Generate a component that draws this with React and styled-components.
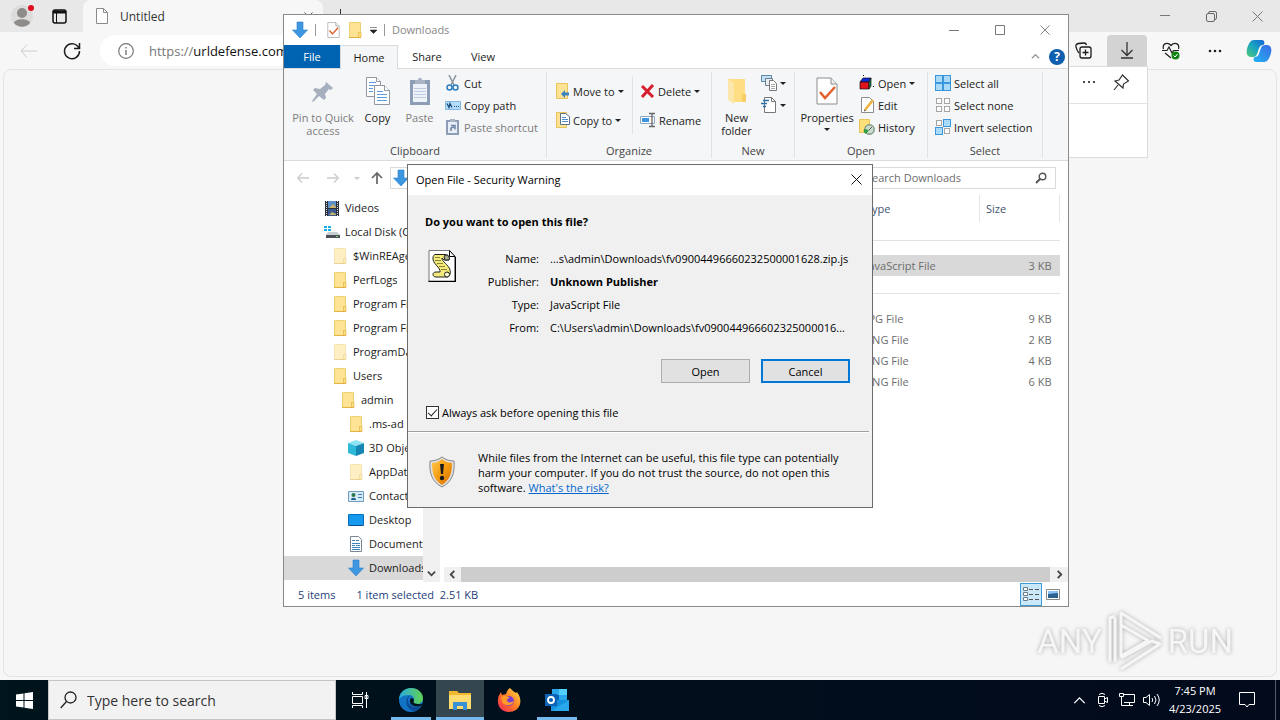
import React, {useState} from 'react'
import styled, {createGlobalStyle, css} from 'styled-components';

const GlobalStyle = createGlobalStyle`
  * {
    box-sizing: border-box;
  }
  body {
    margin: 0;
    overflow: hidden;
    font-family: "Open Sans", "Noto Sans", sans-serif;
    font-size: 11px;
    color: #1b1b1b;
  }
  button, input {
    font: inherit;
    color: inherit;
    margin: 0;
    padding: 0;
    border: 0;
    background: none;
  }
  svg {
    display: block;
    flex: none;
  }
`;

const Screen = styled.div`
  position: relative;
  display: flex;
  flex-direction: column;
  height: 100vh;
`;

/* ---------- browser ---------- */

const Browser = styled.div`
  position: relative;
  flex: 1;
  display: flex;
  flex-direction: column;
  background: #f7f7f7;
`;

const TabStrip = styled.div`
  display: flex;
  height: 32px;
  background: #e8e8e8;
`;

const TabActions = styled.div`
  display: flex;
  align-items: center;
  gap: 17px;
  width: 83px;
  padding-left: 10px;
`;

const BrowserTab = styled.div`
  display: flex;
  align-items: center;
  gap: 12px;
  width: 240px;
  padding: 0 10px 0 13px;
  background: #f7f7f7;
  border-radius: 8px 8px 0 0;
  font-size: 12px;
  color: #333;
`;

const TabTitle = styled.span`
  flex: 1;
`;

const PlainButton = styled.button`
  display: flex;
  align-items: center;
  justify-content: center;
`;

const NewTab = styled(PlainButton)`
  width: 34px;
`;

const WindowButtons = styled.div`
  display: flex;
  margin-left: auto;
`;

const WindowButton = styled(PlainButton)`
  width: ${props => props.$width || 46}px;
  color: #777;
`;

const Toolbar = styled.div`
  display: flex;
  align-items: center;
  height: 37px;
  padding: 0 1px 0 18px;
`;

const NavButton = styled(PlainButton)`
  width: 20px;
  margin-right: 24px;
`;

const AddressBar = styled.label`
  display: flex;
  align-items: center;
  flex: 1;
  height: 31px;
  margin: 0 20px 0 -6px;
  padding-left: 18px;
  background: #fff;
  border-radius: 16px;
  font-size: 13px;
  color: #777;
`;

const Scheme = styled.span`
  margin-left: 15px;
`;

const UrlInput = styled.input`
  flex: 1;
  min-width: 0;
  outline: 0;
  color: #111;
`;

const ToolButton = styled(PlainButton)`
  width: 40px;
  height: 31px;
  margin-left: 4px;
  border-radius: 4px 4px 0 0;
  background: ${props => props.$active ? '#d3d3d3' : 'none'};
`;

const PageView = styled.div`
  flex: 1;
  margin: 0 3px 3px;
  border: 1px solid #e3e3e3;
  border-radius: 8px;
  background: #f6f6f6;
`;

const DownloadsFlyout = styled.div`
  position: absolute;
  top: 66px;
  right: 132px;
  width: 360px;
  height: 92px;
  background: #fff;
  border: 1px solid #dcdcdc;
`;

const FlyoutHeader = styled.div`
  display: flex;
  align-items: center;
  justify-content: flex-end;
  gap: 17px;
  height: 37px;
  padding: 0 17px 6px;
  border-bottom: 1px solid #e3e3e3;
`;

/* ---------- file explorer ---------- */

const Explorer = styled.section`
  position: absolute;
  top: 14px;
  left: 283px;
  right: 211px;
  bottom: 113px;
  display: flex;
  flex-direction: column;
  background: #fff;
  border: 1px solid #8a8a8a;
`;

const TitleBar = styled.header`
  display: flex;
  height: 30px;
`;

const QuickAccess = styled.div`
  display: flex;
  align-items: center;
  gap: 7px;
  padding-left: 8px;
  color: #888;
`;

const PropertiesButton = styled(PlainButton)`
  padding-left: 4px;
`;

const Bar = styled.span`
  width: 1px;
  height: 12px;
  background: #999;
`;

/* lifts a caption so that it lines up with the icon beside it */
const Caption = styled.span`
  padding-bottom: 2px;
`;

const RibbonTabs = styled.nav`
  display: flex;
  height: 24px;
  border-bottom: 1px solid #dadbdc;
`;

const RibbonTab = styled.button`
  width: ${props => props.$width || 56}px;
  ${props => props.$file && css`
    background: #0063b1;
    color: #fff;
  `}
  ${props => props.$current && css`
    height: 24px;
    background: #f5f6f7;
    border: 1px solid #dadbdc;
    border-bottom: 0;
  `}
`;

const RibbonHelp = styled.div`
  display: flex;
  align-items: center;
  gap: 9px;
  margin-left: auto;
  padding-right: 3px;
`;

const HelpButton = styled.button`
  width: 16px;
  height: 16px;
  line-height: 16px;
  border-radius: 8px;
  background: #0f5fae;
  color: #fff;
  font-weight: 700;
  font-size: 12px;
`;

const Ribbon = styled.div`
  display: flex;
  height: 92px;
  background: #f5f6f7;
  border-bottom: 1px solid #dadbdc;
`;

const RibbonGroup = styled.div`
  display: flex;
  flex-direction: column;
  width: ${props => props.$width}px;
  margin: 3px 0 2px;
  border-right: 1px solid #e1e2e4;
`;

const GroupBody = styled.div`
  display: flex;
  flex: 1;
  padding-left: ${props => props.$indent || 0}px;
`;

const GroupName = styled.div`
  height: 15px;
  line-height: 15px;
  text-align: center;
  color: #444;
`;

const BigButton = styled.button`
  display: flex;
  flex-direction: column;
  align-items: center;
  justify-content: flex-start;
  width: ${props => props.$width}px;
  padding-top: 5px;
  line-height: 13px;
  color: ${props => props.$off ? '#7c7c7c' : '#1b1b1b'};
  span {
    margin-top: 6px;
  }
  span + svg {
    margin-top: 4px;
  }
`;

const SmallList = styled.div`
  display: flex;
  flex-direction: column;
  gap: ${props => props.$loose ? 7 : 0}px;
  padding: ${props => props.$loose ? '8px 0 0' : '0'};
  width: ${props => props.$width || 'auto'};
`;

const SmallButton = styled.button`
  display: flex;
  align-items: center;
  gap: 3px;
  height: 22px;
  white-space: nowrap;
  color: ${props => props.$off ? '#7c7c7c' : '#1b1b1b'};
`;

const Separator = styled.span`
  width: 1px;
  height: 58px;
  margin: 4px 7px 0 5px;
  background: #e1e2e4;
`;

const PathRow = styled.div`
  display: flex;
  align-items: center;
  height: 34px;
  padding: 0 12px;
`;

const PathButton = styled(PlainButton)`
  width: ${props => props.$width}px;
`;

const UpButton = styled(PathButton)`
  padding-left: 11px;
`;

const PathBox = styled.div`
  display: flex;
  align-items: center;
  flex: 1;
  height: 22px;
  margin: 0 8px 0 4px;
  padding-left: 2px;
  border: 1px solid #d9d9d9;
`;

const SearchBox = styled.label`
  display: flex;
  align-items: center;
  width: 198px;
  height: 22px;
  padding: 0 8px 0 7px;
  border: 1px solid #d9d9d9;
  input {
    flex: 1;
    min-width: 0;
    padding-bottom: 2px;
    outline: 0;
  }
  input::placeholder {
    color: #6d6d6d;
  }
`;

const Panes = styled.div`
  display: flex;
  flex: 1;
  min-height: 0;
`;

const Tree = styled.div`
  width: 139px;
  padding-top: 1px;
  overflow: hidden;
`;

const TreeItem = styled.button`
  display: flex;
  align-items: center;
  gap: 5px;
  width: 100%;
  height: 24px;
  padding-left: ${props => 40 + props.$level * 8}px;
  overflow: hidden;
  white-space: nowrap;
  background: ${props => props.$selected ? '#d9d9d9' : 'none'};
`;

const TreeScroll = styled.div`
  display: flex;
  align-items: flex-end;
  justify-content: center;
  width: 17px;
  padding-bottom: 4px;
  background: #f0f0f0;
`;

const FilePane = styled.div`
  display: flex;
  flex: 1;
  flex-direction: column;
  justify-content: space-between;
  margin-left: 4px;
`;

const FileTable = styled.table`
  width: calc(100% - 8px);
  border-collapse: collapse;
  table-layout: fixed;
  color: #6d6d6d;
  th {
    height: 27px;
    padding: 0 6px;
    border-right: 1px solid #e5e5e5;
    font-weight: 400;
    text-align: left;
    color: #44546f;
  }
  td {
    height: 21px;
    padding: 0 6px;
  }
  td:last-child {
    padding-right: 8px;
    text-align: right;
  }
`;

const FileRow = styled.tr`
  background: ${props => props.$selected ? '#d9d9d9' : 'none'};
`;

const GroupRow = styled.tr`
  && td {
    height: ${props => props.$height}px;
    padding: 0;
  }
`;

const GroupLine = styled.div`
  height: 1px;
  margin: ${props => props.$top}px 0 14px;
  background: #e2e2e2;
`;

const BottomScroll = styled.div`
  display: flex;
  align-items: center;
  height: 15px;
  background: #f0f0f0;
`;

const ScrollThumb = styled.div`
  flex: 1;
  height: 15px;
  background: #cdcdcd;
`;

const StatusBar = styled.footer`
  display: flex;
  align-items: center;
  gap: 21px;
  height: 24px;
  padding: 0 4px 0 14px;
  color: #26417c;
`;

const ViewButtons = styled.div`
  display: flex;
  margin-left: auto;
`;

const ViewButton = styled(PlainButton)`
  width: 22px;
  height: 23px;
  ${props => props.$active && css`
    background: #cbe8f9;
    border: 1px solid #3d9bd8;
  `}
`;

/* ---------- warning dialog ---------- */

const DialogLayer = styled.div`
  position: absolute;
  top: 164px;
  left: 0;
  right: 0;
  display: flex;
  justify-content: center;
`;

const Dialog = styled.form`
  width: 466px;
  background: #f0f0f0;
  border: 1px solid #6b6b6b;
  color: #000;
`;

const DialogTitle = styled.div`
  display: flex;
  align-items: center;
  justify-content: space-between;
  height: 30px;
  padding: 0 10px 2px 8px;
  background: #fff;
`;

const DialogBody = styled.div`
  padding: 19px 22px 11px 17px;
`;

const Question = styled.h1`
  margin: 0 0 20px;
  font-size: 11px;
  line-height: 16px;
`;

const FileInfo = styled.div`
  display: flex;
`;

const IconSlot = styled.div`
  width: 30px;
  padding-left: 3px;
`;

const Fields = styled.dl`
  display: grid;
  flex: 1;
  grid-template-columns: 84px 1fr;
  column-gap: 11px;
  margin: -3px 0 0;
  line-height: 23px;
  white-space: nowrap;
  dt {
    text-align: right;
  }
  dd {
    margin: 0;
  }
`;

const Actions = styled.div`
  display: flex;
  justify-content: flex-end;
  gap: 11px;
  margin: 20px 0 21px;
`;

const DialogButton = styled.button`
  width: 89px;
  height: 24px;
  background: #e1e1e1;
  border: 1px solid #adadad;
  ${props => props.$default && css`
    border: 2px solid #0078d7;
  `}
`;

const CheckLabel = styled.label`
  display: flex;
  align-items: center;
  gap: 3px;
  height: 16px;
  padding-left: 1px;
`;

const CheckBox = styled.input`
  appearance: none;
  display: flex;
  justify-content: center;
  width: 13px;
  height: 13px;
  background: #fff;
  border: 1px solid #333;
  &:checked::after {
    content: "";
    width: 4px;
    height: 8px;
    border: solid #222;
    border-width: 0 1px 1px 0;
    transform: rotate(42deg);
  }
`;

const Advice = styled.div`
  display: flex;
  gap: 22px;
  margin-right: 3px;
  padding: 18px 8px 12px 20px;
  border-top: 1px solid #a0a0a0;
  box-shadow: inset 0 1px #fff;
  p {
    margin: 0;
    line-height: 15px;
  }
  a {
    color: #0066cc;
  }
`;

const ShieldBox = styled.div`
  padding-top: 6px;
`;

/* ---------- taskbar ---------- */

const Taskbar = styled.footer`
  display: flex;
  height: 40px;
  background: linear-gradient(90deg, #00141c, #020a1c);
  color: #fff;
`;

const TaskButton = styled(PlainButton)`
  width: 48px;
  background: ${props => props.$active ? '#34474f' : 'none'};
  ${props => props.$open && css`
    box-shadow: inset 0 -3px #76b9ed;
    width: 40px;
    margin: 0 4px;
  `}
  ${props => props.$active && css`
    width: 48px;
    margin: 0 1px;
  `}
`;

const TaskSearch = styled.label`
  display: flex;
  align-items: center;
  gap: 10px;
  width: 288px;
  padding-left: 11px;
  background: #f2f2f2;
  border: 1px solid #c5c5c5;
  font-size: 14px;
  input {
    flex: 1;
    outline: 0;
  }
  input::placeholder {
    color: #333;
  }
`;

const TaskGroup = styled.div`
  display: flex;
  padding-left: 3px;
`;

const Tray = styled.div`
  display: flex;
  align-items: center;
  margin-left: auto;
`;

const TrayButton = styled(PlainButton)`
  width: 24px;
  height: 40px;
`;

const Clock = styled.time`
  width: 64px;
  text-align: center;
  line-height: 18px;
  font-size: 11px;
`;

const Notifications = styled(PlainButton)`
  width: 48px;
  padding-right: 8px;
`;

const ShowDesktop = styled.button`
  width: 5px;
  height: 40px;
  border-left: 1px solid #56606a;
`;

const Watermark = styled.div`
  position: absolute;
  right: 47px;
  bottom: 48px;
  display: flex;
  align-items: center;
  gap: 5px;
  font-family: Roboto, "Liberation Sans", sans-serif;
  font-size: 33px;
  color: #f6f6f6;
  filter: drop-shadow(0 0 2px #aaa);
`;

/* ---------- icons ---------- */

const Caret = ({color = '#222'}) => (
  <svg width="6" height="3"><path d="M0 0h6L3 3z" fill={color} /></svg>
);

const Chevron = ({turn = 0, size = 9, color = '#444', weight = 2}) => (
  <svg width={size} height={size} viewBox="0 0 10 10">
    <path d="M1 3l4 4 4-4" transform={`rotate(${turn} 5 5)`} fill="none" stroke={color} strokeWidth={weight} />
  </svg>
);

const Cross = ({size = 11, color = '#777'}) => (
  <svg width={size} height={size} viewBox="0 0 11 11"><path d="M.5.5l10 10M10.500.5l-10 10" stroke={color} /></svg>
);

const DownArrow = () => (
  <svg width="16" height="18" viewBox="0 0 16 18">
    <path d="M5 1h6v8h4.500L8 17 .5 9H5z" fill="#3c96e0" stroke="#2b7fca" strokeWidth=".6" />
  </svg>
);

const Folder = ({pale}) => (
  <svg width="16" height="16" viewBox="0 0 16 16" opacity={pale ? 0.55 : 1}>
    <path d="M2.500.5h11v15h-11z" fill="#ffe394" stroke="#efcf74" />
    <path d="M11.500 10.500h2.500v5h-2.500z" fill="#ffdf80" stroke="#e4b94d" strokeWidth=".8" />
    <path d="M2 15.500h12" stroke="#e0b040" />
  </svg>
);

const PageCheck = ({width = 13, height = 16}) => (
  <svg width={width} height={height} viewBox="0 0 22 28">
    <path d="M1 1h14l6 6v20H1z" fill="#fff" stroke="#8c8c8c" />
    <path d="M15 1v6h6" fill="#eee" stroke="#8c8c8c" />
    <path d="M4 15l5 6 10-11" fill="none" stroke="#e2622f" strokeWidth="2.500" />
  </svg>
);

const Pushpin = () => (
  <svg width="24" height="28" viewBox="0 0 24 28">
    <path d="M15 5l7 6-2 2-2-1-4 5 1 4-2 2-5-4-6 6-1-1 5-7-4-4 2-2 5 1 5-4z" fill="#a5afbd" />
  </svg>
);

const CopyPages = () => (
  <svg width="26" height="28" viewBox="0 0 26 28">
    <g fill="#fff" stroke="#8f98a3">
      <path d="M1.500.5h10l4 4v15h-14z" />
      <path d="M9.500 8.500h10l5 5v14h-15z" />
      <path d="M19.500 8.500v5h5M11.500.5v4h4" />
    </g>
    <path d="M4 5.500h7M4 8.500h5M4 11.500h4M4 14.500h4M12 14.500h6M12 17.500h10M12 20.500h10M12 23.500h10" stroke="#5a9bdc" />
  </svg>
);

const Clipboard = () => (
  <svg width="22" height="28" viewBox="0 0 22 28">
    <path d="M1 3h20v25H1z" fill="#8d9db5" />
    <path d="M4 7h14v18H4z" fill="#edf1f8" />
    <path d="M6 3h3c0-3 4-3 4 0h3v4H6z" fill="#a9b4c4" />
    <path d="M5 11.500h12M5 14.500h12M5 17.500h12M5 20.500h12" stroke="#bdcae0" />
  </svg>
);

const Scissors = () => (
  <svg width="16" height="16" viewBox="0 0 16 16">
    <path d="M4 0l5 10M11 0L6 10" stroke="#8a949f" strokeWidth="1.500" />
    <circle cx="4.500" cy="12.500" r="2.500" fill="none" stroke="#2c7ec2" strokeWidth="1.500" />
    <circle cx="10.500" cy="12.500" r="2.500" fill="none" stroke="#2c7ec2" strokeWidth="1.500" />
  </svg>
);

const PathIcon = () => (
  <svg width="16" height="16" viewBox="0 0 16 16">
    <path d="M.5 4.500h15v8H.5z" fill="#b5dcf8" stroke="#81b9e2" />
    <path d="M2 6.500l2 4 1-4 2 4M9 9.500h1M11 9.500h1M13 9.500h1" fill="none" stroke="#174a7a" strokeWidth="1.200" />
  </svg>
);

const ShortcutIcon = () => (
  <svg width="16" height="16" viewBox="0 0 16 16">
    <path d="M2 2h11v13H2z" fill="#e8eef7" stroke="#8d9db5" strokeWidth="2" />
    <path d="M5 0h5v3H5z" fill="#a9b4c4" />
    <path d="M6 12V9l3-1M6 6.500h4v4" fill="none" stroke="#6e83a5" strokeWidth="1.500" />
  </svg>
);

const MoveIcon = () => (
  <svg width="14" height="16" viewBox="0 0 14 16">
    <path d="M.5.5h11v15H.5z" fill="#ffe394" stroke="#eac35c" />
    <path d="M5 11l4-4v2.500h4v3H9V15z" fill="#3a82bf" />
  </svg>
);

const CopyToIcon = () => (
  <svg width="14" height="16" viewBox="0 0 14 16">
    <path d="M.5.5h10v15H.5z" fill="#ffe394" stroke="#eac35c" />
    <path d="M4.500 1.500h5l4 3v8h-9z" fill="#fff" stroke="#5a7186" />
    <path d="M6 5.500h4M6 7.500h6M6 9.500h6" stroke="#4f8fd0" />
  </svg>
);

const DeleteIcon = () => (
  <svg width="15" height="14" viewBox="0 0 15 14"><path d="M2 2l11 11M13 1L2 13" stroke="#d61f2c" strokeWidth="3" /></svg>
);

const RenameIcon = () => (
  <svg width="16" height="16" viewBox="0 0 16 16">
    <path d="M.5 4.500h14v7H.5z" fill="#fff" stroke="#8aa9c4" />
    <path d="M2 6h7v4H2z" fill="#3e96dc" />
    <path d="M9 1.500h6M9 14.500h6M12 1.500v13" stroke="#666" strokeWidth="1.300" />
  </svg>
);

const BigFolder = () => (
  <svg width="22" height="28" viewBox="0 0 22 28">
    <path d="M2 2h17v15h1v8H4V6H2z" fill="#ffdd83" />
    <path d="M2 2l6 4v21l-6-4z" fill="#fbe6ac" />
    <path d="M16 17h4v8h-4z" fill="#f7cd65" />
  </svg>
);

const NewItemIcon = () => (
  <svg width="16" height="16" viewBox="0 0 16 16">
    <path d="M.5.5h10v6H.5z" fill="#bfe2f6" stroke="#5f87a0" />
    <path d="M4.500 3.500h7v7h-7z" fill="#e7eef4" stroke="#6e7d89" />
    <path d="M8.500 5.500h4l3 3v7h-7z" fill="#fff" stroke="#777" />
    <path d="M10 9.500h4M10 11.500h4M10 13.500h4" stroke="#aaa" />
  </svg>
);

const EasyAccessIcon = () => (
  <svg width="16" height="16" viewBox="0 0 16 16">
    <path d="M3.500.5h7l4 4v11h-11z" fill="#fff" stroke="#777" />
    <path d="M10.500.5v4h4" fill="none" stroke="#777" />
    <path d="M2 3.500h6M0 6.500h6M2 9.500h3" stroke="#2a71ae" strokeWidth="1.400" />
  </svg>
);

const OpenIcon = () => (
  <svg width="16" height="16" viewBox="0 0 16 16">
    <path d="M1 7l3-4h8l-2 4z" fill="#0b27d8" stroke="#111" strokeWidth=".7" />
    <path d="M1 7h9v7H1z" fill="#e1141c" stroke="#111" strokeWidth=".7" />
    <path d="M10 7l2-4v8l-2 3z" fill="#14884b" stroke="#111" strokeWidth=".7" />
    <path d="M4 .5h1M14 11.500h1" stroke="#111" />
  </svg>
);

const EditIcon = () => (
  <svg width="16" height="16" viewBox="0 0 16 16">
    <path d="M2.500.5h8l4 4v11h-12z" fill="#fff" stroke="#8c8c8c" />
    <path d="M6 13L14 3" stroke="#eeb03c" strokeWidth="2.500" />
    <path d="M5 14.500l.5-2 1.500 1z" fill="#333" />
  </svg>
);

const HistoryIcon = () => (
  <svg width="16" height="16" viewBox="0 0 16 16">
    <path d="M.5.5h10v13H.5z" fill="#ffe078" stroke="#eac35c" />
    <circle cx="10.500" cy="10.500" r="4.700" fill="#c9dccd" stroke="#7d9484" strokeWidth="1.400" />
    <path d="M10 11l3-3" stroke="#555" />
    <path d="M5 10l5 1-3 4c-2-1-3-3-2-5z" fill="#2f9a43" />
  </svg>
);

const TILES = [[0, 0], [8, 0], [0, 8], [8, 8]];

const SelectIcon = ({on}) => (
  <svg width="16" height="16" viewBox="0 0 16 16">
    {TILES.map(([x, y], i) => on[i]
      ? <rect key={i} x={x + .5} y={y + .5} width="7" height="7" fill="#a9daf8" stroke="#3c97da" />
      : <rect key={i} x={x + 1.5} y={y + 1.5} width="5" height="5" fill="#fff" stroke="#a5a5a5" />)}
  </svg>
);

const VideosIcon = () => (
  <svg width="16" height="16" viewBox="0 0 16 16">
    <path d="M1 1h14v15H1z" fill="#2b2f3b" />
    <path d="M4 1h8v7H4z" fill="#5d8fc9" />
    <path d="M4 9h8v7H4z" fill="#39598f" />
    <path d="M5 8l4-4 3 3v1zM5 15l3-3 4 2v1z" fill="#c8b36a" />
    <path d="M2.500 1v15M13.500 1v15" stroke="#ddd" strokeDasharray="1 1" />
  </svg>
);

const DiskIcon = () => (
  <svg width="16" height="16" viewBox="0 0 16 16">
    <path d="M0 2h3v2H0zM4 2h3v2H4zM0 5h3v2H0zM4 5h3v2H4z" fill="#18b0e8" />
    <path d="M4 8h9l3 3H2z" fill="#c9ced2" />
    <path d="M2 11h14v3H2z" fill="#4b5156" />
    <path d="M12 12h2v1h-2z" fill="#7be37b" />
  </svg>
);

const CubeIcon = () => (
  <svg width="16" height="16" viewBox="0 0 16 16">
    <path d="M0 3l8-3 8 3-8 3z" fill="#8fe3f3" />
    <path d="M0 3l8 3v10l-8-3z" fill="#2fb9d8" />
    <path d="M16 3L8 6v10l8-3z" fill="#1687b5" />
  </svg>
);

const ContactIcon = () => (
  <svg width="16" height="16" viewBox="0 0 16 16">
    <path d="M.5 3.500h15v10H.5z" fill="#d7ebf8" stroke="#6d9cc0" />
    <path d="M3 12c0-3 5-3 5 0z" fill="#1f5d94" />
    <circle cx="5.500" cy="7" r="2" fill="#2d7447" />
    <path d="M10 6.500h4M10 9.500h4" stroke="#3b7fb6" />
  </svg>
);

const DesktopIcon = () => (
  <svg width="16" height="16" viewBox="0 0 16 16">
    <path d="M.5 2.500h15v11H.5z" fill="#159af0" stroke="#0a70bd" />
    <path d="M1 13.500h14" stroke="#0a4f8c" />
  </svg>
);

const DocumentIcon = () => (
  <svg width="16" height="16" viewBox="0 0 16 16">
    <path d="M2.500.5h8l3 3v12h-11z" fill="#fff" stroke="#7b8894" />
    <path d="M4 4.500h3M8 4.500h3M4 7.500h8M4 9.500h3M8 9.500h4M4 11.500h8M4 13.500h8" stroke="#3d86bd" />
  </svg>
);

const ScriptIcon = () => (
  <svg width="28" height="32" viewBox="0 0 28 32">
    <path d="M1 .5h20.500l5.500 6v25H1z" fill="#fff" stroke="#777" />
    <path d="M.5 31.500h27V7" fill="none" stroke="#000" strokeWidth="1.500" />
    <path d="M21.500.5v6H27z" fill="#fff" stroke="#000" />
    <path d="M7 4.500h10c4 0 5 3 4 5.500h-5l-2-2c-1 3 7 7 8 12 1 5-1 7-3 7H8c-4 0-4-5 0-5h4c1-4-8-9-7-14 0-2 1-3.500 2-3.500z" fill="#f3ea7b" stroke="#222" />
    <path d="M17 5c4 0 5 3 4 5h-4l-1-3z" fill="#a7a98f" stroke="#222" />
    <path d="M7 7.500h5M7 10.500h6M9 13.500h6M11 16.500h6M13 19.500h6" stroke="#8a8536" />
    <circle cx="19" cy="24.500" r="2.500" fill="#fffbd2" stroke="#222" />
  </svg>
);

const Shield = () => (
  <svg width="28" height="32" viewBox="0 0 28 32">
    <defs>
      <linearGradient id="amber" x1="0" y1="0" x2="1" y2="1">
        <stop offset="0" stopColor="#ffc84a" />
        <stop offset=".5" stopColor="#f59b11" />
        <stop offset="1" stopColor="#d96f00" />
      </linearGradient>
    </defs>
    <path d="M14 1c4 3 8 4 12 4 1 12-2 21-12 26C4 26 1 17 2 5c4 0 8-1 12-4z" fill="#dedede" stroke="#888" />
    <path d="M14 3c4 3 7 4 10 4 0 10-2 17-10 22C6 24 4 17 4 7c3 0 6-1 10-4z" fill="url(#amber)" />
    <path d="M12 8h4l-1 10h-2z" fill="#1a1a1a" />
    <circle cx="14" cy="22" r="2.200" fill="#1a1a1a" />
  </svg>
);

const CopilotIcon = () => (
  <svg width="26" height="24" viewBox="0 0 26 24">
    <defs>
      <linearGradient id="cpA" x1="0" y1="1" x2="1" y2="0">
        <stop offset="0" stopColor="#52c878" />
        <stop offset=".5" stopColor="#18a5c0" />
        <stop offset="1" stopColor="#1664d9" />
      </linearGradient>
      <linearGradient id="cpB" x1="1" y1="0" x2="0" y2="1">
        <stop offset="0" stopColor="#3b6be6" />
        <stop offset="1" stopColor="#20b3f0" />
      </linearGradient>
    </defs>
    <path d="M8 1h8c3 0 3 5 1 5-4 0-4 4-6 9-1 3-3 3-6 3-4 0-5-4-4-8S4 1 8 1z" fill="url(#cpA)" />
    <path d="M18 23h-8c-3 0-3-5-1-5 4 0 4-4 6-9 1-3 3-3 6-3 4 0 5 4 4 8s-3 9-7 9z" fill="url(#cpB)" />
  </svg>
);

const EdgeIcon = () => (
  <svg width="24" height="24" viewBox="0 0 24 24">
    <defs>
      <linearGradient id="edA" x1="0" y1="0" x2="1" y2="0">
        <stop offset="0" stopColor="#2aa9e0" />
        <stop offset="1" stopColor="#62d34f" />
      </linearGradient>
    </defs>
    <circle cx="12" cy="12" r="12" fill="#1273c4" />
    <path d="M0 12C0 5 5 0 12 0s12 5 12 10c0 4-3 6-6 6-3 0-4-1-4-2s1-1 1-3-2-4-5-4c-6 0-10 3-10 5z" fill="url(#edA)" />
    <path d="M10 8c-4 2-4 14 6 15 3-1 5-3 6-5-6 3-13 0-13-6 0-2 1-3 1-4z" fill="#0b4a94" />
    <path d="M12 10c-3 4 0 10 10 8l2-3c-2 2-7 1-9 0-1-1 0-2 0-3s-1-2-3-2z" fill="#00141c" />
  </svg>
);

const FilesIcon = () => (
  <svg width="24" height="20" viewBox="0 0 24 20">
    <path d="M1 1h8l2 2h12v16H1z" fill="#f5b731" />
    <path d="M1 5h22v14H1z" fill="#ffdc6f" />
    <path d="M5 12h14v8h-4v-4H9v4H5z" fill="#3a91d4" />
  </svg>
);

const FirefoxIcon = () => (
  <svg width="24" height="24" viewBox="0 0 24 24">
    <defs>
      <linearGradient id="fox" x1="1" y1="0" x2="0" y2="1">
        <stop offset="0" stopColor="#ffe14a" />
        <stop offset=".5" stopColor="#ff7a22" />
        <stop offset="1" stopColor="#f0225f" />
      </linearGradient>
    </defs>
    <path d="M13 0c2 2 4 4 6 5l1-1c3 4 4 8 3 12-1 5-6 8-11 8C5 24 0 19 1 11c0-3 2-5 3-7l1 3 4-1c1-3 2-5 4-6z" fill="url(#fox)" />
    <circle cx="12" cy="13" r="5" fill="#7a3bd3" />
    <path d="M4 9c4-2 7-1 9 1-2 0-3 1-3 2 0 3 4 3 7 1-1 5-9 6-12 1z" fill="#ff9a2a" />
  </svg>
);

const OutlookIcon = () => (
  <svg width="24" height="24" viewBox="0 0 24 24">
    <path d="M7 1h15v12H7z" fill="#28a8ea" />
    <path d="M14 1h8v6h-8z" fill="#50d0ff" />
    <path d="M7 7h7v6H7z" fill="#0364b8" />
    <path d="M6 12h18v11H6z" fill="#1490df" />
    <path d="M24 12L6 23h18z" fill="#28a8ea" />
    <path d="M0 6h12v12H0z" fill="#0a63b5" />
    <circle cx="6" cy="12" r="3" fill="none" stroke="#fff" strokeWidth="1.800" />
  </svg>
);

const PlayLogo = () => (
  <svg width="56" height="62" viewBox="0 0 56 62" fill="none" stroke="#f6f6f6" strokeWidth="4" strokeLinejoin="round">
    <path d="M14 15v31l27-15.500z" strokeWidth="3" />
    <path d="M14 14V3l40 25M3 52V8l5-2M8 52V8M14 48l31-17 8 3-39 25" strokeWidth="3" />
  </svg>
);

/* ---------- data ---------- */

const treeItems = [
  {name: 'Videos', level: 0, icon: <VideosIcon />},
  {name: 'Local Disk (C:)', level: 0, icon: <DiskIcon />},
  {name: '$WinREAgent', level: 1, icon: <Folder pale />},
  {name: 'PerfLogs', level: 1, icon: <Folder />},
  {name: 'Program Files', level: 1, icon: <Folder />},
  {name: 'Program Files (x86)', level: 1, icon: <Folder />},
  {name: 'ProgramData', level: 1, icon: <Folder pale />},
  {name: 'Users', level: 1, icon: <Folder />},
  {name: 'admin', level: 2, icon: <Folder />},
  {name: '.ms-ad', level: 3, icon: <Folder />},
  {name: '3D Objects', level: 3, icon: <CubeIcon />},
  {name: 'AppData', level: 3, icon: <Folder pale />},
  {name: 'Contacts', level: 3, icon: <ContactIcon />},
  {name: 'Desktop', level: 3, icon: <DesktopIcon />},
  {name: 'Documents', level: 3, icon: <DocumentIcon />},
  {name: 'Downloads', level: 3, icon: <DownArrow />},
];

const olderFiles = [
  ['JPG File', '9 KB'],
  ['PNG File', '2 KB'],
  ['PNG File', '4 KB'],
  ['PNG File', '6 KB'],
];

/* ---------- parts ---------- */

function BrowserWindow() {
  return (
    <Browser>
      <TabStrip>
        <TabActions>
          <PlainButton aria-label="Profile">
            <svg width="25" height="24" viewBox="0 0 25 24">
              <circle cx="12" cy="12" r="11" fill="#dcdcdc" />
              <circle cx="12" cy="9" r="5" fill="#8f8b88" />
              <path d="M4 19c1-5 15-5 16 0-4 5-12 5-16 0z" fill="#8f8b88" />
              <circle cx="21" cy="4" r="3" fill="#e00b1c" />
            </svg>
          </PlainButton>
          <PlainButton aria-label="Tab actions">
            <svg width="15" height="15" viewBox="0 0 15 15">
              <rect x="1" y="1" width="13" height="13" rx="2" fill="none" stroke="#111" strokeWidth="1.500" />
              <path d="M1 3h13" stroke="#111" strokeWidth="3" />
              <path d="M4.500 3v11" stroke="#111" />
            </svg>
          </PlainButton>
        </TabActions>
        <BrowserTab>
          <svg width="12" height="16" viewBox="0 0 12 16"><path d="M.5.5h7l4 4v11H.5zM7.500.5v4h4" fill="#fdfdfd" stroke="#8a8a8a" /></svg>
          <TabTitle>Untitled</TabTitle>
          <PlainButton aria-label="Close tab"><Cross size={9} color="#444" /></PlainButton>
        </BrowserTab>
        <NewTab aria-label="New tab"><svg width="12" height="14"><path d="M0 7.500h12M6.500 0v14" stroke="#333" /></svg></NewTab>
        <WindowButtons>
          <WindowButton aria-label="Minimize browser"><svg width="10" height="2"><path d="M0 .5h10" stroke="#777" /></svg></WindowButton>
          <WindowButton aria-label="Restore browser">
            <svg width="11" height="11" viewBox="0 0 11 11"><path d="M2.500 2.500V2Q2.500.5 4 .5h5Q10.500.5 10.500 2v5Q10.500 8.500 8.500 8.500M.5 4Q.5 2.500 2 2.500h5Q8.500 2.500 8.500 4v5Q8.500 10.500 7 10.500H2Q.5 10.500.5 9z" fill="none" stroke="#666" /></svg>
          </WindowButton>
          <WindowButton aria-label="Close browser"><Cross /></WindowButton>
        </WindowButtons>
      </TabStrip>
      <Toolbar>
        <NavButton aria-label="Back"><svg width="17" height="14" viewBox="0 0 17 14"><path d="M7 .5L1 7l6 6.500M1 7h16" fill="none" stroke="#ccc" /></svg></NavButton>
        <NavButton aria-label="Refresh">
          <svg width="18" height="18" viewBox="0 0 18 18"><path d="M16 6.500A7.500 7.500 0 1 0 16.500 9M16.500 1v5.500H11" fill="none" stroke="#1b1b1b" strokeWidth="1.500" /></svg>
        </NavButton>
        <AddressBar>
          <svg width="16" height="16" viewBox="0 0 16 16"><circle cx="8" cy="8" r="7.300" fill="none" stroke="#777" strokeWidth="1.200" /><path d="M8 7v5M8 4v1.500" stroke="#777" strokeWidth="1.400" /></svg>
          <Scheme>https://</Scheme>
          <UrlInput aria-label="Address" defaultValue="urldefense.com" />
        </AddressBar>
        <ToolButton aria-label="Collections">
          <svg width="17" height="17" viewBox="0 0 17 17" fill="none" stroke="#1b1b1b" strokeWidth="1.300"><path d="M4 11C2 9 .5 4 1 3q1-2 8-2 2 0 2.500 2" /><rect x="5" y="5" width="11" height="11" rx="2" /><path d="M10.500 7.500v6M7.500 10.500h6" /></svg>
        </ToolButton>
        <ToolButton $active aria-label="Downloads">
          <svg width="14" height="17" viewBox="0 0 14 17"><path d="M7 0v13M1.500 8L7 13.500 12.500 8M1 16h12" fill="none" stroke="#333" strokeWidth="1.300" /></svg>
        </ToolButton>
        <ToolButton aria-label="Browser essentials">
          <svg width="18" height="18" viewBox="0 0 18 18">
            <path d="M1.500 7C0 1 6 0 9 3.500 12 0 18 1 16.500 7M0 8.500h5L7 5l3 6 1.500-2.500H17M3 11l6 5" fill="none" stroke="#222" strokeWidth="1.200" />
            <circle cx="13.500" cy="13.500" r="4" fill="#128312" /><path d="M11.500 13.500l1.500 1.500 2.500-3" fill="none" stroke="#fff" />
          </svg>
        </ToolButton>
        <ToolButton aria-label="More">
          <svg width="14" height="4" fill="#222"><circle cx="2" cy="2" r="1.300" /><circle cx="7" cy="2" r="1.300" /><circle cx="12" cy="2" r="1.300" /></svg>
        </ToolButton>
        <ToolButton aria-label="Copilot"><CopilotIcon /></ToolButton>
      </Toolbar>
      <PageView />
      <DownloadsFlyout>
        <FlyoutHeader>
          <PlainButton aria-label="More options">
            <svg width="14" height="4" fill="#222"><circle cx="2" cy="2" r="1.100" /><circle cx="7" cy="2" r="1.100" /><circle cx="12" cy="2" r="1.100" /></svg>
          </PlainButton>
          <PlainButton aria-label="Keep open">
            <svg width="17" height="17" viewBox="0 0 17 17"><path d="M1 16l4-5M9.500 1l6 6-5 3-.5 4-8-7 4-1z" fill="none" stroke="#333" strokeWidth="1.200" /></svg>
          </PlainButton>
        </FlyoutHeader>
      </DownloadsFlyout>
    </Browser>
  )
}

function ExplorerRibbon() {
  return (
    <Ribbon>
      <RibbonGroup $width={263}>
        <GroupBody $indent={1}>
          <BigButton $width={76} $off><Pushpin /><span>Pin to Quick<br />access</span></BigButton>
          <BigButton $width={33}><CopyPages /><span>Copy</span></BigButton>
          <BigButton $width={51} $off><Clipboard /><span>Paste</span></BigButton>
          <SmallList>
            <SmallButton><Scissors />Cut</SmallButton>
            <SmallButton><PathIcon />Copy path</SmallButton>
            <SmallButton $off><ShortcutIcon />Paste shortcut</SmallButton>
          </SmallList>
        </GroupBody>
        <GroupName>Clipboard</GroupName>
      </RibbonGroup>
      <RibbonGroup $width={165}>
        <GroupBody $indent={9}>
          <SmallList $loose $width="71px">
            <SmallButton><MoveIcon />Move to <Caret /></SmallButton>
            <SmallButton><CopyToIcon />Copy to <Caret /></SmallButton>
          </SmallList>
          <Separator />
          <SmallList $loose>
            <SmallButton><DeleteIcon />Delete <Caret /></SmallButton>
            <SmallButton><RenameIcon />Rename</SmallButton>
          </SmallList>
        </GroupBody>
        <GroupName>Organize</GroupName>
      </RibbonGroup>
      <RibbonGroup $width={83}>
        <GroupBody>
          <BigButton $width={49}><BigFolder /><span>New<br />folder</span></BigButton>
          <SmallList>
            <SmallButton aria-label="New item"><NewItemIcon /><Caret /></SmallButton>
            <SmallButton aria-label="Easy access"><EasyAccessIcon /><Caret /></SmallButton>
          </SmallList>
        </GroupBody>
        <GroupName>New</GroupName>
      </RibbonGroup>
      <RibbonGroup $width={133}>
        <GroupBody>
          <BigButton $width={64}><PageCheck width={22} height={28} /><span>Properties</span><Caret /></BigButton>
          <SmallList>
            <SmallButton><OpenIcon />Open <Caret /></SmallButton>
            <SmallButton><EditIcon />Edit</SmallButton>
            <SmallButton><HistoryIcon />History</SmallButton>
          </SmallList>
        </GroupBody>
        <GroupName>Open</GroupName>
      </RibbonGroup>
      <RibbonGroup $width={115}>
        <GroupBody $indent={7}>
          <SmallList>
            <SmallButton><SelectIcon on={[1, 1, 1, 1]} />Select all</SmallButton>
            <SmallButton><SelectIcon on={[0, 0, 0, 0]} />Select none</SmallButton>
            <SmallButton><SelectIcon on={[0, 1, 1, 0]} />Invert selection</SmallButton>
          </SmallList>
        </GroupBody>
        <GroupName>Select</GroupName>
      </RibbonGroup>
    </Ribbon>
  )
}

function FileExplorer() {
  const [selected, setSelected] = useState('Downloads');

  return (
    <Explorer>
      <TitleBar>
        <QuickAccess>
          <DownArrow />
          <Bar />
          <PropertiesButton aria-label="Properties"><PageCheck /></PropertiesButton>
          <PlainButton aria-label="New folder"><Folder /></PlainButton>
          <PlainButton aria-label="Customize toolbar"><svg width="7" height="7"><path d="M0 .5h7M0 3h7L3.500 6.500z" fill="#222" stroke="#222" strokeWidth=".5" /></svg></PlainButton>
          <Bar />
          <Caption>Downloads</Caption>
        </QuickAccess>
        <WindowButtons>
          <WindowButton aria-label="Minimize"><svg width="10" height="1"><path d="M0 .5h10" stroke="#777" /></svg></WindowButton>
          <WindowButton aria-label="Maximize" $width={45}><svg width="10" height="10"><path d="M.5.5h9v9h-9z" fill="none" stroke="#777" /></svg></WindowButton>
          <WindowButton aria-label="Close"><Cross size={10} /></WindowButton>
        </WindowButtons>
      </TitleBar>
      <RibbonTabs>
        <RibbonTab $file>File</RibbonTab>
        <RibbonTab $width={58} $current>Home</RibbonTab>
        <RibbonTab $width={58}>Share</RibbonTab>
        <RibbonTab $width={54}>View</RibbonTab>
        <RibbonHelp>
          <PlainButton aria-label="Collapse ribbon"><Chevron turn={180} color="#999" weight={1.5} /></PlainButton>
          <HelpButton>?</HelpButton>
        </RibbonHelp>
      </RibbonTabs>
      <ExplorerRibbon />
      <PathRow>
        <PathButton $width={14} aria-label="Back"><svg width="12" height="10"><path d="M5 .5L.7 5 5 9.500M1 5h11" fill="none" stroke="#ccc" strokeWidth="1.300" /></svg></PathButton>
        <PathButton $width={46} aria-label="Forward"><svg width="12" height="10"><path d="M7 .5L11.300 5 7 9.500M11 5H0" fill="none" stroke="#ccc" strokeWidth="1.300" /></svg></PathButton>
        <PathButton $width={1} aria-label="Recent locations"><Caret color="#ccc" /></PathButton>
        <UpButton $width={29} aria-label="Up"><svg width="12" height="12"><path d="M1 6l5-5 5 5M6 1v11" fill="none" stroke="#666" strokeWidth="1.700" /></svg></UpButton>
        <PathBox><DownArrow /></PathBox>
        <SearchBox>
          <input type="search" aria-label="Search Downloads" placeholder="Search Downloads" />
          <svg width="12" height="12"><path d="M1 11l4-4" stroke="#555" strokeWidth="2" /><circle cx="7.500" cy="4.500" r="3.300" fill="none" stroke="#555" strokeWidth="1.400" /></svg>
        </SearchBox>
      </PathRow>
      <Panes>
        <Tree>
          {treeItems.map(item => (
            <TreeItem key={item.name} $level={item.level} $selected={item.name === selected} onClick={() => setSelected(item.name)}>
              {item.icon}
              <Caption>{item.name}</Caption>
            </TreeItem>
          ))}
        </Tree>
        <TreeScroll><Chevron /></TreeScroll>
        <FilePane>
          <FileTable>
            <colgroup><col /><col width="120" /><col width="80" /></colgroup>
            <thead>
              <tr><th></th><th>Type</th><th>Size</th></tr>
            </thead>
            <tbody>
              <GroupRow $height={33}><td colSpan="3"><GroupLine $top={18} /></td></GroupRow>
              <FileRow $selected><td></td><td>JavaScript File</td><td>3 KB</td></FileRow>
              <GroupRow $height={32}><td colSpan="3"><GroupLine $top={17} /></td></GroupRow>
              {olderFiles.map(([type, size], i) => (
                <FileRow key={i}><td></td><td>{type}</td><td>{size}</td></FileRow>
              ))}
            </tbody>
          </FileTable>
          <BottomScroll>
            <PathButton $width={17} aria-label="Scroll left"><Chevron turn={90} /></PathButton>
            <ScrollThumb />
            <PathButton $width={18} aria-label="Scroll right"><Chevron turn={270} /></PathButton>
          </BottomScroll>
        </FilePane>
      </Panes>
      <StatusBar>
        <span>5 items</span>
        <span>1 item selected&nbsp; 2.51 KB</span>
        <ViewButtons>
          <ViewButton $active aria-label="Details view">
            <svg width="16" height="14"><path d="M.5.5h4v3h-4zM.5 5.500h4v3h-4zM.5 10.500h4v3h-4z" fill="#fff" stroke="#6d7c88" /><path d="M6 2.500h4M12 2.500h4M6 7.500h4M12 7.500h4M6 12.500h4M12 12.500h4" stroke="#555" /></svg>
          </ViewButton>
          <ViewButton aria-label="Large icons view">
            <svg width="14" height="11"><path d="M.5.5h13v10H.5z" fill="#fff" stroke="#888" /><path d="M2 2h10v3H2z" fill="#8ac4f4" /><path d="M2 5l10-1v5H2z" fill="#2a6390" /></svg>
          </ViewButton>
        </ViewButtons>
      </StatusBar>
    </Explorer>
  )
}

function SecurityWarning() {
  const [ask, setAsk] = useState(true);

  return (
    <DialogLayer>
      <Dialog onSubmit={e => e.preventDefault()}>
        <DialogTitle>
          <span>Open File - Security Warning</span>
          <PlainButton type="button" aria-label="Close warning"><Cross color="#111" /></PlainButton>
        </DialogTitle>
        <DialogBody>
          <Question>Do you want to open this file?</Question>
          <FileInfo>
            <IconSlot><ScriptIcon /></IconSlot>
            <Fields>
              <dt>Name:</dt><dd>...s\admin\Downloads\fv09004496660232500001628.zip.js</dd>
              <dt>Publisher:</dt><dd><b>Unknown Publisher</b></dd>
              <dt>Type:</dt><dd>JavaScript File</dd>
              <dt>From:</dt><dd>C:\Users\admin\Downloads\fv090044966602325000016...</dd>
            </Fields>
          </FileInfo>
          <Actions>
            <DialogButton type="button">Open</DialogButton>
            <DialogButton type="button" $default>Cancel</DialogButton>
          </Actions>
          <CheckLabel>
            <CheckBox type="checkbox" checked={ask} onChange={() => setAsk(!ask)} />
            Always ask before opening this file
          </CheckLabel>
        </DialogBody>
        <Advice>
          <ShieldBox><Shield /></ShieldBox>
          <p>
            While files from the Internet can be useful, this file type can potentially
            harm your computer. If you do not trust the source, do not open this
            software. <a href="#risk">What's the risk?</a>
          </p>
        </Advice>
      </Dialog>
    </DialogLayer>
  )
}

function WindowsTaskbar() {
  return (
    <Taskbar>
      <TaskButton aria-label="Start">
        <svg width="17" height="17" viewBox="0 0 17 17"><path d="M0 2.500L7.500 1.500V8H0zM8.500 1.300L17 0v8H8.500zM0 9h7.500v6.500L0 14.500zM8.500 9H17v8l-8.500-1.300z" fill="#fff" /></svg>
      </TaskButton>
      <TaskSearch>
        <svg width="17" height="18" viewBox="0 0 17 18"><circle cx="10.500" cy="6.500" r="5.500" fill="none" stroke="#222" strokeWidth="1.300" /><path d="M6.500 10.500L.7 17" stroke="#222" strokeWidth="1.300" /></svg>
        <input type="search" aria-label="Search" placeholder="Type here to search" />
      </TaskSearch>
      <TaskButton aria-label="Task view">
        <svg width="17" height="16" viewBox="0 0 17 16" fill="none" stroke="#fff"><path d="M.5 0v2.500h10V0M.5 16v-2.500h10V16M.5 4.500h10v7H.5zM14.500 0v16M13 6.500h3v-3h-3z" /></svg>
      </TaskButton>
      <TaskGroup>
        <TaskButton $open aria-label="Microsoft Edge"><EdgeIcon /></TaskButton>
        <TaskButton $open $active aria-label="File Explorer"><FilesIcon /></TaskButton>
        <TaskButton aria-label="Firefox"><FirefoxIcon /></TaskButton>
        <TaskButton $open aria-label="Outlook"><OutlookIcon /></TaskButton>
      </TaskGroup>
      <Tray>
        <TrayButton aria-label="Hidden icons"><Chevron turn={180} size={13} color="#fff" weight={1} /></TrayButton>
        <TrayButton aria-label="Meet now"><svg width="12" height="16" viewBox="0 0 12 16" fill="none" stroke="#fff"><path d="M1.500 4.500h6v7h-6zM7.500 7l3-1.500v5L7.500 9M2 2.500q3-2.500 6 0M2 13.500q3 2.500 6 0" /></svg></TrayButton>
        <TrayButton aria-label="Network"><svg width="16" height="14" viewBox="0 0 16 14" fill="none" stroke="#fff"><path d="M5 1.500h10.500v8H5M.5.5h4v3h-4zM2.500 3.500v9H7M10.500 9.500v3M7 12.500h7" /></svg></TrayButton>
        <TrayButton aria-label="Volume"><svg width="17" height="14" viewBox="0 0 17 14" fill="none" stroke="#fff"><path d="M.5 4.500h2.500l3.500-3v11L3 9.500H.5zM9 5q1.500 2 0 4M11.500 3q3 4 0 8M14 1q4.500 6 0 12" /></svg></TrayButton>
        <Clock>7:45 PM<br />4/23/2025</Clock>
        <Notifications aria-label="Notifications"><svg width="16" height="16" viewBox="0 0 16 16"><path d="M.5.5h15v12H10L8 15l-2-2.500H.5z" fill="none" stroke="#fff" /></svg></Notifications>
        <ShowDesktop aria-label="Show desktop" />
      </Tray>
    </Taskbar>
  )
}

function App() {
  return (
    <Screen>
      <GlobalStyle />
      <BrowserWindow />
      <FileExplorer />
      <SecurityWarning />
      <Watermark><span>ANY</span><PlayLogo /><span>RUN</span></Watermark>
      <WindowsTaskbar />
    </Screen>
  )
}

export default App
